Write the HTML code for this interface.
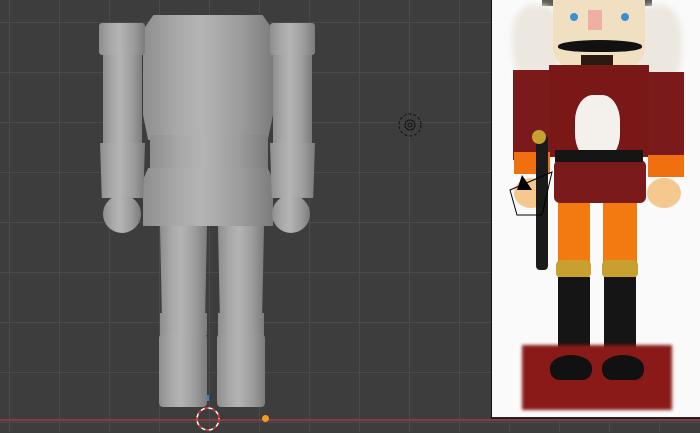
<!DOCTYPE html>
<html><head><meta charset="utf-8"><style>
*{margin:0;padding:0;box-sizing:border-box}
body{width:700px;height:432px;overflow:hidden;background:#3d3d3d;position:relative;font-family:"Liberation Sans",sans-serif}
.a{position:absolute}
.grid{position:absolute;inset:0;background-image:linear-gradient(to right,#4a4a4a 1px,transparent 1px),linear-gradient(to bottom,#4a4a4a 1px,transparent 1px);background-size:50px 50px;background-position:9px 22px}
.g{background:linear-gradient(to right,#8e8e8e,#a8a8a8 25%,#b4b4b4 45%,#9c9c9c 75%,#7c7c7c)}
</style></head><body>
<div class="grid"></div>
<!-- torso -->
<div class="a g" style="left:143px;top:15px;width:130px;height:125px;clip-path:polygon(8% 0,92% 0,100% 12%,100% 80%,96% 100%,4% 100%,0 80%,0 12%)"></div>
<div class="a g" style="left:150px;top:135px;width:118px;height:35px"></div>
<div class="a g" style="left:143px;top:168px;width:130px;height:58px;clip-path:polygon(4% 0,96% 0,100% 20%,100% 100%,0 100%,0 20%)"></div>
<!-- left arm -->
<div class="a g" style="left:99px;top:23px;width:46px;height:32px;border-radius:3px"></div>
<div class="a g" style="left:103px;top:55px;width:39px;height:90px"></div>
<div class="a g" style="left:100px;top:143px;width:45px;height:55px;clip-path:polygon(0 0,100% 0,96% 100%,4% 100%)"></div>
<div class="a g" style="left:103px;top:195px;width:38px;height:38px;border-radius:50%"></div>
<!-- right arm -->
<div class="a g" style="left:270px;top:23px;width:45px;height:32px;border-radius:3px"></div>
<div class="a g" style="left:273px;top:55px;width:39px;height:90px"></div>
<div class="a g" style="left:270px;top:143px;width:45px;height:55px;clip-path:polygon(0 0,100% 0,96% 100%,4% 100%)"></div>
<div class="a g" style="left:272px;top:195px;width:38px;height:38px;border-radius:50%"></div>
<!-- legs -->
<div class="a g" style="left:160px;top:226px;width:47px;height:90px;clip-path:polygon(0 0,100% 0,96% 100%,4% 100%)"></div>
<div class="a g" style="left:218px;top:226px;width:46px;height:90px;clip-path:polygon(0 0,100% 0,96% 100%,4% 100%)"></div>
<div class="a g" style="left:160px;top:313px;width:47px;height:22px"></div>
<div class="a g" style="left:218px;top:313px;width:46px;height:22px"></div>
<div class="a g" style="left:159px;top:334px;width:48px;height:73px;border-radius:4px"></div>
<div class="a g" style="left:217px;top:334px;width:48px;height:73px;border-radius:4px"></div>
<!-- empty -->
<svg class="a" style="left:396px;top:111px" width="28" height="28"><circle cx="14" cy="14" r="11" fill="none" stroke="#111" stroke-dasharray="3 2"/><circle cx="14" cy="14" r="5" fill="none" stroke="#111"/><circle cx="14" cy="14" r="2" fill="none" stroke="#111"/></svg>
<!-- axis -->
<div class="a" style="left:0;top:419px;width:700px;height:2px;background:#8a3a44"></div>
<div class="a" style="left:207px;top:395px;width:2px;height:6px;background:#4a7ad0"></div>
<svg class="a" style="left:194px;top:405px" width="28" height="28"><circle cx="14" cy="14" r="11" fill="none" stroke="#fff" stroke-width="1.5"/><circle cx="14" cy="14" r="11" fill="none" stroke="#d22" stroke-width="1.5" stroke-dasharray="4 4"/></svg>
<div class="a" style="left:262px;top:415px;width:7px;height:7px;border-radius:50%;background:#f0a020"></div>
<!-- photo (coords relative to x=491) -->
<div class="a" style="left:491px;top:0;width:209px;height:419px;background:#fbfafb;border-left:1px solid #111;border-bottom:2px solid #222;overflow:hidden">
 <div class="a" style="left:50px;top:0;width:110px;height:6px;background:#5a5a52"></div>
 <div class="a" style="left:20px;top:5px;width:50px;height:75px;background:#ece8e0;border-radius:40%;filter:blur(3px)"></div>
 <div class="a" style="left:140px;top:5px;width:50px;height:80px;background:#ece8e0;border-radius:40%;filter:blur(3px)"></div>
 <div class="a" style="left:61px;top:0;width:92px;height:68px;background:#f0dfc0;border-radius:0 0 20px 20px"></div>
 <div class="a" style="left:78px;top:13px;width:8px;height:8px;background:#3a90d0;border-radius:50%"></div>
 <div class="a" style="left:129px;top:13px;width:8px;height:8px;background:#3a90d0;border-radius:50%"></div>
 <div class="a" style="left:96px;top:10px;width:14px;height:20px;background:#f0b0a0"></div>
 <div class="a" style="left:66px;top:40px;width:84px;height:12px;background:#111;border-radius:50% 50% 40% 40%"></div>
 <div class="a" style="left:89px;top:55px;width:32px;height:35px;background:#2a1a10"></div>
 <div class="a" style="left:21px;top:70px;width:37px;height:90px;background:#7a1a1a"></div>
 <div class="a" style="left:156px;top:72px;width:36px;height:88px;background:#7a1a1a"></div>
 <div class="a" style="left:57px;top:65px;width:100px;height:92px;background:#7a1818"></div>
 <div class="a" style="left:83px;top:95px;width:45px;height:65px;background:#f4f1ec;border-radius:40%"></div>
 <div class="a" style="left:22px;top:152px;width:36px;height:22px;background:#f07010"></div>
 <div class="a" style="left:156px;top:155px;width:36px;height:22px;background:#f07010"></div>
 <div class="a" style="left:22px;top:178px;width:34px;height:30px;background:#f5c890;border-radius:50%"></div>
 <div class="a" style="left:155px;top:178px;width:34px;height:30px;background:#f5c890;border-radius:50%"></div>
 <div class="a" style="left:62px;top:160px;width:92px;height:43px;background:#7a1a1a;border-radius:6px"></div>
 <div class="a" style="left:63px;top:150px;width:88px;height:12px;background:#151515"></div>
 <div class="a" style="left:44px;top:135px;width:12px;height:135px;background:#1a1a1a;border-radius:4px"></div>
 <div class="a" style="left:40px;top:130px;width:14px;height:14px;background:#c8a030;border-radius:50%"></div>
 <div class="a" style="left:66px;top:203px;width:32px;height:62px;background:#f27a10"></div>
 <div class="a" style="left:111px;top:203px;width:34px;height:62px;background:#f27a10"></div>
 <div class="a" style="left:64px;top:260px;width:35px;height:18px;background:#c8a030;border-radius:5px"></div>
 <div class="a" style="left:110px;top:260px;width:36px;height:18px;background:#c8a030;border-radius:5px"></div>
 <div class="a" style="left:66px;top:277px;width:32px;height:85px;background:#151515"></div>
 <div class="a" style="left:112px;top:277px;width:32px;height:85px;background:#151515"></div>
 <div class="a" style="left:30px;top:345px;width:150px;height:65px;background:#8a1a18;filter:blur(1.5px)"></div>
 <div class="a" style="left:58px;top:355px;width:42px;height:25px;background:#111;border-radius:50% 50% 10px 10px"></div>
 <div class="a" style="left:110px;top:355px;width:42px;height:25px;background:#111;border-radius:50% 50% 10px 10px"></div>
 <svg class="a" style="left:15px;top:170px" width="70" height="50"><polygon points="15,5 25,20 10,20" fill="#000"/><polygon points="3,20 45,2 35,45 10,45" fill="none" stroke="#000"/></svg>
</div>
</body></html>
